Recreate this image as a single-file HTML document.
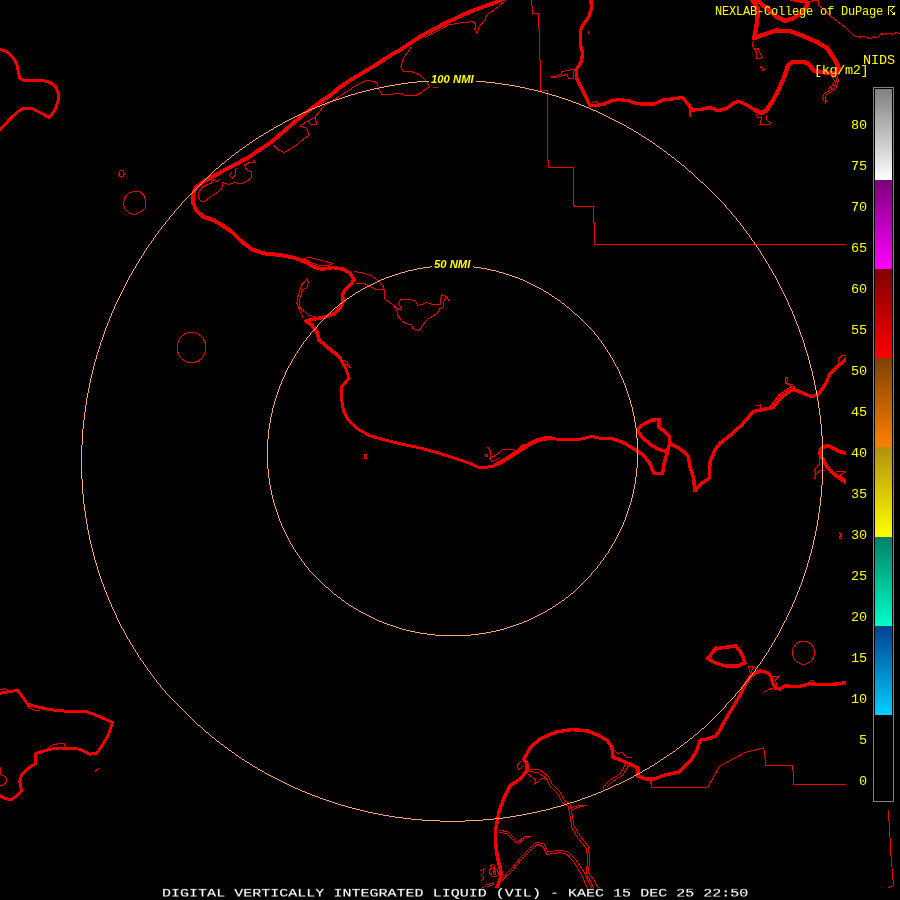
<!DOCTYPE html>
<html lang="en">
<head>
<meta charset="utf-8">
<title>DIGITAL VERTICALLY INTEGRATED LIQUID (VIL) - KAEC</title>
<style>
html,body{margin:0;padding:0;background:#000;}
body{width:900px;height:900px;position:relative;overflow:hidden;}
#map{position:absolute;left:0;top:0;width:900px;height:900px;display:block;}
.t{position:absolute;white-space:pre;line-height:1;margin:0;padding:0;color:#ffff00;
   font-family:"Liberation Mono","DejaVu Sans Mono",monospace;}
.t{will-change:transform;}
.f7{font-size:12px;letter-spacing:-0.2px;}
.f8{font-size:13.5px;letter-spacing:-0.1px;}
.lab{right:33px;text-align:right;}
.rl{font-family:"Liberation Sans","DejaVu Sans",sans-serif;font-weight:bold;font-style:italic;font-size:11.3px;}
#title{left:161.8px;top:888.1px;color:#fff;font-size:15px;letter-spacing:0.02px;-webkit-text-stroke:0.12px #fff;transform:scaleY(0.77);transform-origin:0 0;}
</style>
</head>
<body>
<svg id="map" width="900" height="900" viewBox="0 0 900 900" shape-rendering="crispEdges">
<defs>
<linearGradient id="g0" x1="0" y1="0" x2="0" y2="1"><stop offset="0" stop-color="#808080"/><stop offset="1" stop-color="#ffffff"/></linearGradient>
<linearGradient id="g1" x1="0" y1="0" x2="0" y2="1"><stop offset="0" stop-color="#7c007c"/><stop offset="1" stop-color="#ff00ff"/></linearGradient>
<linearGradient id="g2" x1="0" y1="0" x2="0" y2="1"><stop offset="0" stop-color="#800000"/><stop offset="1" stop-color="#ff0000"/></linearGradient>
<linearGradient id="g3" x1="0" y1="0" x2="0" y2="1"><stop offset="0" stop-color="#804000"/><stop offset="1" stop-color="#ff8000"/></linearGradient>
<linearGradient id="g4" x1="0" y1="0" x2="0" y2="1"><stop offset="0" stop-color="#b09010"/><stop offset="1" stop-color="#ffff00"/></linearGradient>
<linearGradient id="g5" x1="0" y1="0" x2="0" y2="1"><stop offset="0" stop-color="#008064"/><stop offset="1" stop-color="#00ffc8"/></linearGradient>
<linearGradient id="g6" x1="0" y1="0" x2="0" y2="1"><stop offset="0" stop-color="#004090"/><stop offset="1" stop-color="#00d0ff"/></linearGradient>
</defs>
<rect x="0" y="0" width="900" height="900" fill="#000"/>
<g fill="none" stroke="#f20000" stroke-width="1" stroke-linejoin="miter">
<path d="M215.6,178.9 211.1,181.1 212.2,182.8 207.8,184.4 202.2,187.2 198.9,192.2 198.3,197.8 201.1,201.1 205,201.1 210.6,196.7 216.7,192.8 221.7,188.9 222.8,182.8 228.9,184.4 233.3,182.8 242.2,183.3 247.8,180.6 251.7,177.2 251.1,171.7 246.7,170 244.4,165 248.9,162.8 256.1,162.8 253.3,160 M236.1,168.3 235,175.6 232.2,178.3 229.4,175.6 231.7,172.2 M213,180.5 217,181.5 220,179 M273.3,145 278.3,150 284.2,152.5 290,149.2 296.7,145 303.3,139.2 309.2,135 306.7,128.3 300,125.8 308.3,120.8 315,117.5 316.7,124.2 310,124.2 308.3,120.8 M315,117.5 316.7,115 323.3,106.7 333.3,100 346.7,91.7 356.7,85 366.7,80 376.7,82.5 378.3,88.3 381.7,94.2 391.7,94.2 401.7,93.3 405,95.8 415,95.8 420,93.3 429.2,86.7 426.7,81.7 420,75 411.7,71.7 403.3,71.7 400.8,66.7 403.3,58.3 411.7,46.7 M376.7,82.5 375,81.7 370,80.8 366.7,80 M433,87.5 437.5,87.5 M425,37.5 448.3,25 463.3,22.5 473.3,21.7 475.8,24.2 474.7,29.2 477.5,33.3 479.2,26.7 485,20 486.7,15 495,9.2 503.3,2.5 506.7,-1 M123.3,203.3 125,197.5 129.2,192.8 134.2,191.2 140,191.7 144.2,195.8 145.8,201.7 145,208.3 140.8,211.7 134.2,214.7 129.2,213 125,209.2 123.3,203.3 M364,454 366,454 366.5,458 364.5,458 364,454 M307.5,278.3 301.7,285 298.3,295 296.7,303.3 300,310.8 303.3,318.3 M307.5,278.3 308.3,283.3 306.7,287.5 302.5,290 300,298.3 299.2,306.7 303.3,310.8 308.3,315 315,316.7 M303.3,258.3 310,257.5 323.3,260.8 333.3,263.7 326.7,265.8 318.3,265 311.7,263 306.7,260 303.3,258.3 M354.2,271.7 361.7,272.5 371.7,275.8 378.3,280.8 383.3,286.7 385,293.3 384.2,298.3 388.3,301.7 393.3,305 396.7,310 398.3,316.7 403.3,322.5 411.7,325 412.5,328.3 419.2,330.8 421.7,326.7 426.7,320 433.3,315.8 437.5,313.3 439.2,309.2 443.3,306.7 443.3,301.7 446.7,297.5 449.2,300.8 446.7,296.5 441.7,295 440,300 440,304.2 433.3,305 426.7,302.5 418.3,305.8 415,300.8 409.2,299.2 400.8,299.7 398.3,304.2 401.7,308.3 400,310 393.3,305 M355.8,283.3 365,283.7 371.7,287.5 376.7,290 384.2,289.2 M343,360 347,362 349,366 350.5,368 346.5,364.5 M487.5,446.7 490.8,451.7 490,458.3 495,455.8 503.3,449.2 513.3,449.7 516.7,450.8 523.3,444.2 530,444.2 M485.3,454.3 487.3,454.3 487.3,456.3 485.3,456.3 485.3,454.3 M490,458.3 492,462 496,460 500,458 M785.8,377.5 787.5,377.5 786.7,383.3 793.3,385 795,388 785,383 785.8,377.5 M755,405.8 760,405 760,408 M838.3,362 838.3,359 841.7,355.8 846,355.8 M819.3,454.7 819.3,464 814.7,470 815.3,474.7 820,470.7 825.3,470 M815.3,474.7 814.4,478.7 815.5,479 M836,472 841.3,471.3 846,472 M840,475.3 846,472 M839.5,532 840.5,535 839.5,538 841.5,538 841,533 M531.5,-1 532.5,13.5 538.5,13.5 539.5,43.5 540.5,75 540.5,90.5 547.5,90.5 547.5,160.5 548.5,160.5 548.5,167.5 573.5,167.5 573.5,204.5 574.5,206.5 593.5,206.5 593.5,222.5 594.5,222.5 594.5,244.5 848,244.5 M651.7,780 651.7,787.5 707.7,787.5 719.3,766.5 745,752.5 763.7,747.8 766,765.5 792.8,765.5 793.5,784.5 848,784.5 M888.4,810.4 889.3,825.3 890.4,844 891.3,861.3 892.7,873.3 893.3,886 890.7,886.7 888.3,887.3 M550.8,76.7 556,76 561.7,74.2 561.7,71.7 574.2,69.2 573.3,78.3 568.3,78.3 567.5,74.2 561.7,75.8 556,77.5 550.8,77.3 M588,30.5 588,34 M591.7,103 596,101 598,104 M753.3,40.9 752.4,46.2 756,51.6 756,58.7 762.2,57.8 757.8,48 755,50 M759.6,66.7 764.9,68.4 763.1,71.1 761.5,68 M761.7,116.7 760,124.2 768.3,125 770.8,123.3 766.7,120 766.7,115 M756,114 758,118 761.7,116.7 M690,109 689.5,113 690.3,117.5 M691,110 690.5,113 691.3,117 M834.2,74.7 836.9,80 834.2,87.1 828.9,90.7 823.6,94.2 822.7,98.7 826.2,104 M836.5,74.7 838.5,80 836,88 831,92 826,95 825,99 827,102 M832,75 834.5,81 832,86 828,89 M808,1.8 818.2,0 818.2,5.3 825.3,10.7 832.4,17.8 839.6,23.1 846.7,28.4 853.8,35.6 860,37.3 861.3,36.2 865.3,36.2 866.7,37.3 868.9,38.2 871.6,38.2 873.3,36.4 875.1,37.3 877.8,37.3 879.6,35.1 881.3,33.8 882.2,34.7 883.1,33.3 884.9,34.4 886.7,33.3 890.7,33.3 892,34.4 893.8,34.2 896.9,32 898.7,33.3 901,33.5 M48.3,747.5 55,744.2 64.2,743.3 65.8,747.5 M0,766.7 0.8,775 5.8,776.7 6.7,781.7 3.3,785 0,785 M94.5,772.5 96.5,770 99.5,768 M26.7,705.8 33.3,710 40,710.8 M0,690 4,688.5 8,690 M529,769 540,770 548,776 552,784 560,792 564,800 570,804 572,814 574,826 580,836 588,846 590,860 588,872 594,880 599,889 M527,771.5 538,772.5 546,778 550,786 558,794 562,802 568,806 570,816 572,828 578,838 586,848 588,860 586,872 590,880 594,889 M570,808 580,805 588,805 580,806.5 572,810 M528,774 536,780 534,784 538,782 542,778 548,780 M626,764 620,774 610,780 604,786 603,789 M629,765 623,775 613,781 607,787 M499,830 508,832 514,838 518,842 524,837 531,836 524,839 518,844 513,840 507,834 499,832 M502,878 512,868 520,858 530,848 536,842 544,844 548,852 560,850 568,852 576,860 584,872 592,889 M502,880.5 513,870 521,860 531,850 537,844.5 543,846.5 547,854.5 560,852.5 567,854.5 574,862 581,874 588,889 M650,780 652,787 660,787 M614,750 618,754 622,752 626,757 632,758 M490,866 493,864 495,866 493,869 490,866 M489,870 492,868 497,870 499,874 496,877 492,876 489,872 489,870 M493,870 496,872 495,875 493,873 493,870 M480,871 484,869 483,873 481,875 484,878 481,881 M481.3,889 486.7,884.7 493.8,882.9 494,884.5 487,886.5 M520.5,761 517,766 519,770 524,765 M748.3,666.7 750.6,673.9 753.3,666.7 748.3,666.7 M753.3,666.7 756.7,667.8 757.8,670.6 762.2,668.9 M763.3,692.2 768.9,689.4 773.3,688.3 M773.3,676.7 778.9,676.7 775.6,680 776.7,685.6 M712,650 716,646 720,650 M736,645 739,648 741,646 M809,681.5 812,680 814,682 M814.8,652.7 813.7,657.8 810.5,661.9 806.0,664.2 801.0,664.2 796.5,661.9 793.3,657.8 792.2,652.7 793.3,647.6 796.5,643.5 801.0,641.2 806.0,641.2 810.5,643.5 813.7,647.6 814.8,652.7 M205.7,350.6 203.1,356.9 198.1,361.3 191.9,363.0 185.5,361.6 180.4,357.5 177.4,351.3 177.3,344.4 179.9,338.1 184.9,333.7 191.1,332.0 197.5,333.4 202.6,337.5 205.6,343.7 205.7,350.6 M124.2,173.9 123.4,176.4 121.5,177.4 119.6,176.4 118.8,173.9 119.6,171.4 121.5,170.4 123.4,171.4 124.2,173.9"/>
</g>
<g fill="none" stroke="#f20000" stroke-linejoin="round" stroke-linecap="round">
<path stroke-width="3" d="M0,49.2 6.7,51.7 12.5,56.7 16.7,63.3 18.3,71.7 19.7,78.3 25,80.8 33.3,80.3 41.7,80 50,82.5 55.8,86.7 58.3,93.3 58.3,100 55.8,108.3 51.7,115 49.2,117.5 41.7,113.3 31.7,108.3 23.3,108.3 16.7,112.5 8.3,120.8 0,130"/>
<path stroke-width="4.0" d="M503,-1 495,2.5 470,11.7 445,23.3 420,36.7 400,50 392.2,54.2 383.3,60 374.4,65.8 365.6,71.1 356.7,76.4 347.8,81.8 338.9,88 330,95.6 322.2,100.7 313.3,107.3 304.4,114 295.6,121.1 287.8,128 278.9,135.6 270,143.1 258.9,150.2 250,156.4 233.3,165.8 216.7,174.2 203.3,181.7 195.8,187.5 192.8,195 193.3,203.3 196.7,210.8 203.3,216.7 213.3,220 221.7,225 231.7,231.7 240,240 251.7,249.2 263.3,253.3 280,255 293.3,257.5 305,261.7"/>
<path stroke-width="3.6" d="M293.3,257.5 305,261.7 313.3,266.7 321.7,269.2 333.3,267.5 343.3,269.2 350,273.3 354.2,280 350,285 345,290 342.5,295 343.3,301.7 340,308.3 333.3,314.2 323.3,317.5 313.3,319.2 305.8,320.8 311.7,325 316.7,331.7 319.2,340 326.7,346.7 335,353.3 340,358.3"/>
<path stroke-width="3.0" d="M335,353.3 340,358.3 345.8,368.3 349.2,378.3 341.7,386.7 341.7,400 343.3,410 348.3,420 356.7,428.3 370,435.8 385,440 401.7,444.2 418.3,447.5 436.7,452.5 455,458.3 470,463.3 480,468 493.3,466.3 503.3,461.7 515,454.2 526.7,446.7 538.3,440.8 548.3,438.7 560,439.2 573.3,440 583.3,438.7 591.7,436.3 600,438.3 611.7,438.7"/>
<path stroke-width="3.5" d="M600,438.3 611.7,438.7 621.7,441.7 633.3,448.3 643.3,455 649.2,462.5 654.2,473.3 662.5,473.7 664.2,463.3 667.5,451.7 658.3,449.2 650,444.2 641.7,436.7 637.5,430 643.3,424.2 651.7,420 659.2,419.5 659.2,427.5 665,431.7 669.2,435.8 670,443.3 678.3,447.5 688.3,455.8 690,466.7 693.3,476.7 695,490.8 701.7,483.3 709.2,478.3 710,461.7 715,450 720,443.3 731.7,434.2 741.7,425 747.5,418.3 753.3,411.7 761.7,409.7 773.3,407.5 781.7,396.7 793.3,389.2 803.3,393.3 811.7,396.7 818.3,394.2 825,385 830,374.2 838.3,365.8 847,358.5"/>
<path stroke-width="3.5" d="M670,443.3 668.5,447.5 667.5,451.7"/>
<path stroke-width="1.6" d="M771,405.5 779.5,394.5 791,387"/>
<path stroke-width="3" d="M494,465 503,460.3 514.5,453 526,445.5 537.5,439.5 546,437.6 551,437.6"/>
<path stroke-width="3.6" d="M848,453.6 838.7,451.3 832,447.3 826.7,445.3 821.3,448.7 819.3,453.3 822.7,458.7 826,465.3 830.7,471.3 837.3,476.7 848,484"/>
<path stroke-width="2.5" d="M836,474.5 848,481.5"/>
<path stroke-width="3.4" d="M590.8,-2 591.5,8.3 589,16.7 583,25 580.8,30 580.4,45 582.8,53.3 581.3,61.7 576.2,70 576.7,78.3 582.5,90 588,101 589.8,105.3 596,105.5 603.3,104.2 611.7,100.8 618.3,99.5 628.3,100.8 636.7,103.7 653.3,104.2 663.3,100 670,99.2 682.5,97.5 687.5,103.3 692.5,110 701.7,109.2 710,107.5 718.3,110.8 726.7,108.3 733.3,103.3 739.2,101.3 746.7,105 755,110 761.7,113.3"/>
<path stroke-width="4.4" d="M755,110 761.7,113.3 766.7,110 773.3,100 780,86.7 785,75 788.3,65 793.3,61.7 801.7,61.7 807.6,63.1 814.7,71.1 828.9,72.9 837.8,72.9 838.7,67.6 834.2,58.7 827.1,48 816.4,41.8 802.2,35.6 789.8,31.1 775.6,30.6 763.1,34.7 754.2,38.2 756.9,23.1 758,9 751,-2"/>
<path stroke-width="4.4" d="M754.5,-2 766.7,8.3 776.7,16.7 785,20.8 793.3,18.3 803.3,11.7 808,3 806,1.5 792,-1"/>
<path stroke-width="3" d="M0,693.3 8.3,691.7 17.5,690.3 22.5,696.7 27.5,704.2 36.7,706.7 50,709.7 66.7,711.3 86.7,711.7 100,716.7 112.5,722.5 108.3,735 102.5,745 96.7,753.3 90,754.2 80,749.2 71.7,748.3 60,748 50,749.2 41.7,751.7 35.8,753.3 35.8,763.3 28.3,768.3 21.7,775 19.7,781.7 21.7,790.8 16.7,795.8 10.8,800 5,798.3 0,795.8"/>
<path stroke-width="3.5" d="M496,890 499.1,881.6 501.3,874.4 500,867.3 497.3,856.7 495.6,843.3 495.6,830 499,812 504,798 510,786 520,779 527,771 527,764 524,759 530,748 540,739 556,732 572,729.6 588,731 600,736 608,741 612,748 613,757 620,760 630,764 638,768 638,776 646,779 654,779"/>
<path stroke-width="3.4" d="M646,779 654,779 665.7,774.7 678.5,772.3 689,761.8 691.7,758.9 696.7,751.1 699.4,742.2 700.6,740 707.8,738.9 715.6,736.1 719.4,731.1 723.3,723.3 727.8,715.6 733.3,706.7 737.8,698.9 742.2,691.1 745.6,683.9 750,677.2 755.6,672.8 761.1,671.1 767.8,672.8 771.1,676.7 772.8,683.3 775.6,688.3 780,689 784.7,686 798.7,686.5 810.3,683.7 822,684.8 836,684.1 848,682.3"/>
<path stroke-width="3.5" d="M707.7,658.5 715.8,648.7 724,647.5 735.7,645.9 741.5,653.3 745,662.7 738,666.2 726.3,666.2 714.7,662.7 707.7,658.5"/>
</g>
<path transform="translate(0,0.5)" d="M417,81h12M476,81h10M408,82h9M486,82h9M401,83h7M495,83h7M395,84h6M502,84h7M389,85h6M509,85h6M384,86h5M515,86h5M379,87h5M520,87h5M374,88h5M525,88h4M370,89h4M529,89h5M366,90h4M534,90h4M362,91h4M538,91h4M358,92h4M542,92h3M355,93h3M545,93h4M351,94h4M549,94h3M348,95h3M552,95h4M345,96h3M556,96h3M342,97h3M559,97h3M339,98h3M562,98h3M336,99h3M565,99h3M333,100h3M568,100h3M330,101h3M571,101h2M327,102h3M573,102h3M325,103h2M576,103h3M322,104h3M579,104h2M320,105h2M581,105h3M317,106h3M584,106h2M315,107h2M586,107h3M312,108h3M589,108h2M310,109h2M591,109h2M308,110h2M593,110h3M306,111h2M596,111h2M303,112h3M598,112h2M301,113h2M600,113h2M299,114h2M602,114h2M297,115h2M604,115h2M295,116h2M606,116h2M293,117h2M608,117h2M291,118h2M610,118h2M289,119h2M612,119h2M287,120h2M614,120h2M285,121h2M616,121h2M283,122h2M618,122h2M282,123h1M620,123h2M280,124h2M622,124h2M278,125h2M624,125h2M276,126h2M626,126h1M274,127h2M627,127h2M273,128h1M629,128h2M271,129h2M631,129h2M269,130h2M633,130h1M268,131h1M634,131h2M266,132h2M636,132h2M264,133h2M638,133h1M263,134h1M639,134h2M261,135h2M641,135h1M259,136h2M642,136h2M258,137h1M644,137h2M256,138h2M646,138h1M255,139h1M647,139h2M253,140h2M649,140h1M252,141h1M650,141h2M250,142h2M652,142h1M249,143h1M653,143h2M247,144h2M655,144h1M246,145h1M656,145h1M245,146h1M657,146h2M243,147h2M659,147h1M242,148h1M660,148h2M240,149h2M662,149h1M239,150h1M663,150h1M238,151h1M664,151h2M236,152h2M666,152h1M235,153h1M667,153h1M234,154h1M668,154h2M232,155h2M670,155h1M231,156h1M671,156h1M230,157h1M672,157h2M229,158h1M674,158h1M227,159h2M675,159h1M226,160h1M676,160h1M225,161h1M677,161h2M224,162h1M679,162h1M222,163h2M680,163h1M221,164h1M681,164h1M220,165h1M682,165h2M219,166h1M684,166h1M218,167h1M685,167h1M216,168h2M686,168h1M215,169h1M687,169h1M214,170h1M688,170h1M213,171h1M689,171h2M212,172h1M691,172h1M211,173h1M692,173h1M210,174h1M693,174h1M209,175h1M694,175h1M208,176h1M695,176h1M207,177h1M696,177h1M206,178h1M697,178h1M205,179h1M698,179h1M204,180h1M699,180h1M203,181h1M700,181h1M202,182h1M701,182h2M201,183h1M703,183h1M200,184h1M704,184h1M199,185h1M705,185h1M198,186h1M706,186h1M197,187h1M707,187h1M196,188h1M708,188h1M195,189h1M709,189h1M194,190h1M710,190h1M193,191h1M711,191h1M192,192h1M712,192h1M191,193h1M713,193h1M190,194h1M714,194h1M189,195h1M715,195h1M188,196h1M716,196h1M187,197h1M717,197h1M186,198h1M718,198h1M185,199h1M719,199h1M184,200h1M720,200h1M183,201h1M721,201h1M182,202h1M722,202h1M181,203h1M723,203h1M181,204h1M724,204h1M180,205h1M725,205h1M179,206h1M725,206h1M178,207h1M726,207h1M177,208h1M727,208h1M176,209h1M728,209h1M175,210h1M729,210h1M174,211h1M730,211h1M174,212h1M731,212h1M173,213h1M731,213h1M172,214h1M732,214h1M171,215h1M733,215h1M170,216h1M734,216h1M169,217h1M735,217h1M169,218h1M736,218h1M168,219h1M736,219h1M167,220h1M737,220h1M166,221h1M738,221h1M165,222h1M739,222h1M165,223h1M740,223h1M164,224h1M740,224h1M163,225h1M741,225h1M162,226h1M742,226h1M161,227h1M743,227h1M161,228h1M743,228h1M160,229h1M744,229h1M159,230h1M745,230h1M158,231h1M746,231h1M158,232h1M746,232h1M157,233h1M747,233h1M156,234h1M748,234h1M155,235h1M749,235h1M155,236h1M749,236h1M154,237h1M750,237h1M153,238h1M751,238h1M153,239h1M751,239h1M152,240h1M752,240h1M151,241h1M753,241h1M151,242h1M754,242h1M150,243h1M754,243h1M149,244h1M755,244h1M148,245h1M756,245h1M148,246h1M756,246h1M147,247h1M757,247h1M146,248h1M758,248h1M146,249h1M758,249h1M145,250h1M759,250h1M144,251h1M760,251h1M144,252h1M760,252h1M143,253h1M761,253h1M143,254h1M761,254h1M142,255h1M762,255h1M141,256h1M763,256h1M141,257h1M763,257h1M140,258h1M764,258h1M139,259h1M765,259h1M139,260h1M765,260h1M138,261h1M766,261h1M138,262h1M766,262h1M137,263h1M767,263h1M136,264h1M768,264h1M136,265h1M768,265h1M135,266h1M769,266h1M135,267h1M769,267h1M134,268h1M770,268h1M133,269h1M771,269h1M133,270h1M771,270h1M132,271h1M772,271h1M132,272h1M772,272h1M131,273h1M773,273h1M131,274h1M773,274h1M130,275h1M774,275h1M129,276h1M775,276h1M129,277h1M775,277h1M128,278h1M776,278h1M128,279h1M776,279h1M127,280h1M777,280h1M127,281h1M777,281h1M126,282h1M778,282h1M126,283h1M778,283h1M125,284h1M779,284h1M125,285h1M779,285h1M124,286h1M780,286h1M124,287h1M780,287h1M123,288h1M781,288h1M123,289h1M781,289h1M122,290h1M782,290h1M122,291h1M782,291h1M121,292h1M783,292h1M121,293h1M783,293h1M120,294h1M784,294h1M120,295h1M784,295h1M119,296h1M785,296h1M119,297h1M785,297h1M118,298h1M786,298h1M118,299h1M786,299h1M117,300h1M787,300h1M117,301h1M787,301h1M116,302h1M788,302h1M116,303h1M788,303h1M115,304h1M788,304h1M115,305h1M789,305h1M114,306h1M789,306h1M114,307h1M790,307h1M114,308h1M790,308h1M113,309h1M791,309h1M113,310h1M791,310h1M112,311h1M792,311h1M112,312h1M792,312h1M111,313h1M792,313h1M111,314h1M793,314h1M111,315h1M793,315h1M110,316h1M794,316h1M110,317h1M794,317h1M109,318h1M794,318h1M109,319h1M795,319h1M109,320h1M795,320h1M108,321h1M796,321h1M108,322h1M796,322h1M107,323h1M796,323h1M107,324h1M797,324h1M107,325h1M797,325h1M106,326h1M798,326h1M106,327h1M798,327h1M105,328h1M798,328h1M105,329h1M799,329h1M105,330h1M799,330h1M104,331h1M799,331h1M104,332h1M800,332h1M104,333h1M800,333h1M103,334h1M800,334h1M103,335h1M801,335h1M103,336h1M801,336h1M102,337h1M802,337h1M102,338h1M802,338h1M102,339h1M802,339h1M101,340h1M803,340h1M101,341h1M803,341h1M100,342h1M803,342h1M100,343h1M804,343h1M100,344h1M804,344h1M100,345h1M804,345h1M99,346h1M804,346h1M99,347h1M805,347h1M99,348h1M805,348h1M98,349h1M805,349h1M98,350h1M806,350h1M98,351h1M806,351h1M97,352h1M806,352h1M97,353h1M807,353h1M97,354h1M807,354h1M96,355h1M807,355h1M96,356h1M808,356h1M96,357h1M808,357h1M96,358h1M808,358h1M95,359h1M808,359h1M95,360h1M809,360h1M95,361h1M809,361h1M94,362h1M809,362h1M94,363h1M809,363h1M94,364h1M810,364h1M94,365h1M810,365h1M93,366h1M810,366h1M93,367h1M810,367h1M93,368h1M811,368h1M93,369h1M811,369h1M92,370h1M811,370h1M92,371h1M812,371h1M92,372h1M812,372h1M92,373h1M812,373h1M91,374h1M812,374h1M91,375h1M812,375h1M91,376h1M813,376h1M91,377h1M813,377h1M90,378h1M813,378h1M90,379h1M813,379h1M90,380h1M814,380h1M90,381h1M814,381h1M90,382h1M814,382h1M89,383h1M814,383h1M89,384h1M814,384h1M89,385h1M815,385h1M89,386h1M815,386h1M89,387h1M815,387h1M88,388h1M815,388h1M88,389h1M815,389h1M88,390h1M816,390h1M88,391h1M816,391h1M88,392h1M816,392h1M87,393h1M816,393h1M87,394h1M816,394h1M87,395h1M817,395h1M87,396h1M817,396h1M87,397h1M817,397h1M86,398h1M817,398h1M86,399h1M817,399h1M86,400h1M817,400h1M86,401h1M818,401h1M86,402h1M818,402h1M86,403h1M818,403h1M86,404h1M818,404h1M85,405h1M818,405h1M85,406h1M818,406h1M85,407h1M818,407h1M85,408h1M819,408h1M85,409h1M819,409h1M85,410h1M819,410h1M85,411h1M819,411h1M84,412h1M819,412h1M84,413h1M819,413h1M84,414h1M819,414h1M84,415h1M820,415h1M84,416h1M820,416h1M84,417h1M820,417h1M84,418h1M820,418h1M84,419h1M820,419h1M83,420h1M820,420h1M83,421h1M820,421h1M83,422h1M820,422h1M83,423h1M820,423h1M83,424h1M821,424h1M83,425h1M821,425h1M83,426h1M821,426h1M83,427h1M821,427h1M83,428h1M821,428h1M82,429h1M821,429h1M82,430h1M821,430h1M82,431h1M821,431h1M82,432h1M821,432h1M82,433h1M821,433h1M82,434h1M821,434h1M82,435h1M821,435h1M82,436h1M822,436h1M82,437h1M822,437h1M82,438h1M822,438h1M82,439h1M822,439h1M82,440h1M822,440h1M82,441h1M822,441h1M82,442h1M822,442h1M82,443h1M822,443h1M82,444h1M822,444h1M81,445h1M822,445h1M81,446h1M822,446h1M81,447h1M822,447h1M81,448h1M822,448h1M81,449h1M822,449h1M81,450h1M822,450h1M81,451h1M822,451h1M81,452h1M822,452h1M81,453h1M822,453h1M81,454h1M822,454h1M81,455h1M822,455h1M81,456h1M822,456h1M81,457h1M822,457h1M81,458h1M822,458h1M81,459h1M822,459h1M81,460h1M822,460h1M81,461h1M822,461h1M81,462h1M822,462h1M81,463h1M822,463h1M81,464h1M822,464h1M81,465h1M822,465h1M81,466h1M822,466h1M81,467h1M822,467h1M81,468h1M822,468h1M81,469h1M822,469h1M81,470h1M822,470h1M81,471h1M822,471h1M81,472h1M822,472h1M81,473h1M822,473h1M81,474h1M822,474h1M81,475h1M822,475h1M81,476h1M822,476h1M81,477h1M822,477h1M81,478h1M822,478h1M82,479h1M822,479h1M82,480h1M822,480h1M82,481h1M822,481h1M82,482h1M822,482h1M82,483h1M822,483h1M82,484h1M822,484h1M82,485h1M821,485h1M82,486h1M821,486h1M82,487h1M821,487h1M82,488h1M821,488h1M82,489h1M821,489h1M82,490h1M821,490h1M82,491h1M821,491h1M82,492h1M821,492h1M82,493h1M821,493h1M83,494h1M821,494h1M83,495h1M821,495h1M83,496h1M821,496h1M83,497h1M820,497h1M83,498h1M820,498h1M83,499h1M820,499h1M83,500h1M820,500h1M83,501h1M820,501h1M83,502h1M820,502h1M83,503h1M820,503h1M84,504h1M820,504h1M84,505h1M820,505h1M84,506h1M819,506h1M84,507h1M819,507h1M84,508h1M819,508h1M84,509h1M819,509h1M84,510h1M819,510h1M85,511h1M819,511h1M85,512h1M819,512h1M85,513h1M818,513h1M85,514h1M818,514h1M85,515h1M818,515h1M85,516h1M818,516h1M85,517h1M818,517h1M86,518h1M818,518h1M86,519h1M818,519h1M86,520h1M817,520h1M86,521h1M817,521h1M86,522h1M817,522h1M86,523h1M817,523h1M87,524h1M817,524h1M87,525h1M817,525h1M87,526h1M816,526h1M87,527h1M816,527h1M87,528h1M816,528h1M87,529h1M816,529h1M88,530h1M816,530h1M88,531h1M815,531h1M88,532h1M815,532h1M88,533h1M815,533h1M88,534h1M815,534h1M89,535h1M815,535h1M89,536h1M814,536h1M89,537h1M814,537h1M89,538h1M814,538h1M89,539h1M814,539h1M90,540h1M813,540h1M90,541h1M813,541h1M90,542h1M813,542h1M90,543h1M813,543h1M91,544h1M813,544h1M91,545h1M812,545h1M91,546h1M812,546h1M91,547h1M812,547h1M92,548h1M812,548h1M92,549h1M811,549h1M92,550h1M811,550h1M92,551h1M811,551h1M93,552h1M811,552h1M93,553h1M810,553h1M93,554h1M810,554h1M93,555h1M810,555h1M94,556h1M809,556h1M94,557h1M809,557h1M94,558h1M809,558h1M94,559h1M809,559h1M95,560h1M808,560h1M95,561h1M808,561h1M95,562h1M808,562h1M96,563h1M807,563h1M96,564h1M807,564h1M96,565h1M807,565h1M97,566h1M807,566h1M97,567h1M806,567h1M97,568h1M806,568h1M97,569h1M806,569h1M98,570h1M805,570h1M98,571h1M805,571h1M98,572h1M805,572h1M99,573h1M804,573h1M99,574h1M804,574h1M99,575h1M804,575h1M100,576h1M803,576h1M100,577h1M803,577h1M100,578h1M803,578h1M101,579h1M802,579h1M101,580h1M802,580h1M101,581h1M802,581h1M102,582h1M801,582h1M102,583h1M801,583h1M103,584h1M801,584h1M103,585h1M800,585h1M103,586h1M800,586h1M104,587h1M799,587h1M104,588h1M799,588h1M104,589h1M799,589h1M105,590h1M798,590h1M105,591h1M798,591h1M106,592h1M797,592h1M106,593h1M797,593h1M106,594h1M797,594h1M107,595h1M796,595h1M107,596h1M796,596h1M108,597h1M795,597h1M108,598h1M795,598h1M108,599h1M795,599h1M109,600h1M794,600h1M109,601h1M794,601h1M110,602h1M793,602h1M110,603h1M793,603h1M111,604h1M792,604h1M111,605h1M792,605h1M111,606h1M792,606h1M112,607h1M791,607h1M112,608h1M791,608h1M113,609h1M790,609h1M113,610h1M790,610h1M114,611h1M789,611h1M114,612h1M789,612h1M115,613h1M788,613h1M115,614h1M788,614h1M116,615h1M787,615h1M116,616h1M787,616h1M116,617h1M786,617h1M117,618h1M786,618h1M117,619h1M786,619h1M118,620h1M785,620h1M118,621h1M784,621h1M119,622h1M784,622h1M119,623h1M783,623h1M120,624h1M783,624h1M120,625h1M782,625h1M121,626h1M782,626h1M121,627h1M781,627h1M122,628h1M781,628h1M123,629h1M780,629h1M123,630h1M780,630h1M124,631h1M779,631h1M124,632h1M779,632h1M125,633h1M778,633h1M125,634h1M778,634h1M126,635h1M777,635h1M126,636h1M777,636h1M127,637h1M776,637h1M127,638h1M775,638h1M128,639h1M775,639h1M129,640h1M774,640h1M129,641h1M774,641h1M130,642h1M773,642h1M130,643h1M772,643h1M131,644h1M772,644h1M132,645h1M771,645h1M132,646h1M771,646h1M133,647h1M770,647h1M133,648h1M769,648h1M134,649h1M769,649h1M135,650h1M768,650h1M135,651h1M768,651h1M136,652h1M767,652h1M137,653h1M766,653h1M137,654h1M766,654h1M138,655h1M765,655h1M138,656h1M764,656h1M139,657h1M764,657h1M140,658h1M763,658h1M140,659h1M762,659h1M141,660h1M762,660h1M142,661h1M761,661h1M143,662h1M760,662h1M143,663h1M760,663h1M144,664h1M759,664h1M145,665h1M758,665h1M145,666h1M757,666h1M146,667h1M757,667h1M147,668h1M756,668h1M147,669h1M755,669h1M148,670h1M755,670h1M149,671h1M754,671h1M150,672h1M753,672h1M150,673h1M752,673h1M151,674h1M752,674h1M152,675h1M751,675h1M153,676h1M750,676h1M153,677h1M749,677h1M154,678h1M749,678h1M155,679h1M748,679h1M156,680h1M747,680h1M156,681h1M746,681h1M157,682h1M745,682h1M158,683h1M745,683h1M159,684h1M744,684h1M160,685h1M743,685h1M160,686h1M742,686h1M161,687h1M741,687h1M162,688h1M741,688h1M163,689h1M740,689h1M164,690h1M739,690h1M165,691h1M738,691h1M165,692h1M737,692h1M166,693h1M736,693h1M167,694h1M735,694h1M168,695h1M735,695h1M169,696h1M734,696h1M170,697h1M733,697h1M171,698h1M732,698h1M172,699h1M731,699h1M173,700h1M730,700h1M174,701h1M729,701h1M175,702h1M728,702h1M176,703h1M727,703h1M177,704h1M726,704h1M178,705h1M725,705h1M179,706h1M725,706h1M180,707h1M724,707h1M181,708h1M723,708h1M182,709h1M722,709h1M183,710h1M721,710h1M184,711h1M720,711h1M185,712h1M719,712h1M186,713h1M718,713h1M187,714h1M717,714h1M188,715h1M716,715h1M189,716h1M715,716h1M190,717h1M714,717h1M191,718h1M713,718h1M192,719h1M712,719h1M193,720h1M711,720h1M194,721h1M710,721h1M195,722h1M709,722h1M196,723h1M708,723h1M197,724h1M707,724h1M198,725h2M706,725h1M200,726h1M705,726h1M201,727h1M704,727h1M202,728h1M702,728h2M203,729h1M701,729h1M204,730h1M700,730h1M205,731h1M699,731h1M206,732h2M698,732h1M208,733h1M697,733h1M209,734h1M695,734h2M210,735h1M694,735h1M211,736h1M693,736h1M212,737h2M692,737h1M214,738h1M690,738h2M215,739h1M689,739h1M216,740h1M688,740h1M217,741h2M687,741h1M219,742h1M685,742h2M220,743h1M684,743h1M221,744h2M683,744h1M223,745h1M681,745h2M224,746h1M680,746h1M225,747h2M679,747h1M227,748h1M677,748h2M228,749h1M676,749h1M229,750h2M675,750h1M231,751h1M673,751h2M232,752h2M672,752h1M234,753h1M670,753h2M235,754h1M669,754h1M236,755h2M667,755h2M238,756h1M666,756h1M239,757h2M664,757h2M241,758h1M663,758h1M242,759h2M661,759h2M244,760h1M660,760h1M245,761h2M658,761h2M247,762h2M657,762h1M249,763h1M655,763h2M250,764h2M654,764h1M252,765h1M652,765h2M253,766h2M650,766h2M255,767h2M649,767h1M257,768h1M647,768h2M258,769h2M645,769h2M260,770h2M643,770h2M262,771h2M642,771h1M264,772h1M640,772h2M265,773h2M638,773h2M267,774h2M636,774h2M269,775h2M634,775h2M271,776h2M633,776h1M273,777h2M631,777h2M275,778h2M629,778h2M277,779h2M627,779h2M279,780h2M625,780h2M281,781h2M623,781h2M283,782h2M621,782h2M285,783h2M619,783h2M287,784h2M616,784h3M289,785h2M614,785h2M291,786h2M612,786h2M293,787h2M610,787h2M295,788h3M608,788h2M298,789h2M605,789h3M300,790h2M603,790h2M302,791h3M601,791h2M305,792h2M598,792h3M307,793h3M596,793h2M310,794h2M593,794h3M312,795h3M591,795h2M315,796h3M588,796h3M318,797h2M585,797h3M320,798h3M582,798h3M323,799h3M580,799h2M326,800h3M577,800h3M329,801h3M574,801h3M332,802h3M570,802h4M335,803h3M567,803h3M338,804h3M564,804h3M341,805h4M561,805h3M345,806h3M557,806h4M348,807h4M553,807h4M352,808h4M550,808h3M356,809h4M546,809h4M360,810h4M541,810h5M364,811h4M537,811h4M368,812h5M532,812h5M373,813h5M527,813h5M378,814h5M522,814h5M383,815h6M516,815h6M389,816h6M510,816h6M395,817h8M503,817h7M403,818h8M494,818h9M411,819h11M483,819h11M422,820h18M465,820h18M440,821h25M430,266h2M473,266h1M423,267h7M474,267h7M417,268h6M481,268h6M413,269h4M487,269h4M408,270h5M491,270h5M405,271h3M496,271h3M401,272h4M499,272h4M398,273h3M503,273h3M395,274h3M506,274h3M392,275h3M509,275h3M389,276h3M512,276h3M386,277h3M515,277h3M384,278h2M518,278h2M381,279h3M520,279h3M379,280h2M523,280h2M377,281h2M525,281h2M375,282h2M527,282h2M373,283h2M529,283h2M371,284h2M531,284h2M369,285h2M533,285h2M367,286h2M535,286h2M365,287h2M537,287h2M363,288h2M539,288h2M361,289h2M541,289h2M360,290h1M543,290h1M358,291h2M544,291h2M356,292h2M546,292h2M355,293h1M548,293h1M353,294h2M549,294h2M352,295h1M551,295h1M350,296h2M552,296h2M349,297h1M554,297h1M347,298h2M555,298h2M346,299h1M557,299h1M344,300h2M558,300h2M343,301h1M560,301h1M342,302h1M561,302h1M340,303h2M562,303h2M339,304h1M564,304h1M338,305h1M565,305h1M337,306h1M566,306h1M335,307h2M567,307h2M334,308h1M569,308h1M333,309h1M570,309h1M332,310h1M571,310h1M331,311h1M572,311h1M330,312h1M573,312h1M329,313h1M574,313h1M328,314h1M575,314h2M327,315h1M577,315h1M326,316h1M578,316h1M325,317h1M579,317h1M324,318h1M580,318h1M323,319h1M581,319h1M322,320h1M582,320h1M321,321h1M583,321h1M320,322h1M584,322h1M319,323h1M585,323h1M318,324h1M586,324h1M317,325h1M587,325h1M317,326h1M588,326h1M316,327h1M589,327h1M315,328h1M590,328h1M314,329h1M591,329h1M313,330h1M592,330h1M312,331h1M593,331h1M311,332h1M594,332h1M310,333h1M594,333h1M310,334h1M595,334h1M309,335h1M596,335h1M308,336h1M597,336h1M307,337h1M598,337h1M306,338h1M598,338h1M306,339h1M599,339h1M305,340h1M600,340h1M304,341h1M601,341h1M303,342h1M601,342h1M303,343h1M602,343h1M302,344h1M603,344h1M301,345h1M603,345h1M301,346h1M604,346h1M300,347h1M605,347h1M299,348h1M605,348h1M299,349h1M606,349h1M298,350h1M607,350h1M297,351h1M607,351h1M297,352h1M608,352h1M296,353h1M609,353h1M295,354h1M609,354h1M295,355h1M610,355h1M294,356h1M610,356h1M294,357h1M611,357h1M293,358h1M612,358h1M292,359h1M612,359h1M292,360h1M613,360h1M291,361h1M613,361h1M291,362h1M614,362h1M290,363h1M614,363h1M290,364h1M615,364h1M289,365h1M615,365h1M288,366h1M616,366h1M288,367h1M617,367h1M287,368h1M617,368h1M287,369h1M618,369h1M286,370h1M618,370h1M286,371h1M619,371h1M285,372h1M619,372h1M285,373h1M619,373h1M285,374h1M620,374h1M284,375h1M620,375h1M284,376h1M621,376h1M283,377h1M621,377h1M283,378h1M622,378h1M282,379h1M622,379h1M282,380h1M623,380h1M281,381h1M623,381h1M281,382h1M623,382h1M281,383h1M624,383h1M280,384h1M624,384h1M280,385h1M625,385h1M279,386h1M625,386h1M279,387h1M625,387h1M279,388h1M626,388h1M278,389h1M626,389h1M278,390h1M626,390h1M278,391h1M627,391h1M277,392h1M627,392h1M277,393h1M627,393h1M277,394h1M628,394h1M276,395h1M628,395h1M276,396h1M628,396h1M276,397h1M629,397h1M275,398h1M629,398h1M275,399h1M629,399h1M275,400h1M630,400h1M274,401h1M630,401h1M274,402h1M630,402h1M274,403h1M630,403h1M274,404h1M631,404h1M273,405h1M631,405h1M273,406h1M631,406h1M273,407h1M632,407h1M272,408h1M632,408h1M272,409h1M632,409h1M272,410h1M632,410h1M272,411h1M632,411h1M272,412h1M633,412h1M271,413h1M633,413h1M271,414h1M633,414h1M271,415h1M633,415h1M271,416h1M634,416h1M270,417h1M634,417h1M270,418h1M634,418h1M270,419h1M634,419h1M270,420h1M634,420h1M270,421h1M634,421h1M270,422h1M635,422h1M269,423h1M635,423h1M269,424h1M635,424h1M269,425h1M635,425h1M269,426h1M635,426h1M269,427h1M635,427h1M269,428h1M636,428h1M268,429h1M636,429h1M268,430h1M636,430h1M268,431h1M636,431h1M268,432h1M636,432h1M268,433h1M636,433h1M268,434h1M636,434h1M268,435h1M636,435h1M268,436h1M636,436h1M268,437h1M636,437h1M268,438h1M637,438h1M267,439h1M637,439h1M267,440h1M637,440h1M267,441h1M637,441h1M267,442h1M637,442h1M267,443h1M637,443h1M267,444h1M637,444h1M267,445h1M637,445h1M267,446h1M637,446h1M267,447h1M637,447h1M267,448h1M637,448h1M267,449h1M637,449h1M267,450h1M637,450h1M267,451h1M637,451h1M267,452h1M637,452h1M267,453h1M637,453h1M267,454h1M637,454h1M267,455h1M637,455h1M267,456h1M637,456h1M267,457h1M637,457h1M267,458h1M637,458h1M267,459h1M637,459h1M267,460h1M637,460h1M267,461h1M637,461h1M267,462h1M637,462h1M267,463h1M637,463h1M267,464h1M637,464h1M267,465h1M637,465h1M267,466h1M637,466h1M267,467h1M637,467h1M267,468h1M636,468h1M268,469h1M636,469h1M268,470h1M636,470h1M268,471h1M636,471h1M268,472h1M636,472h1M268,473h1M636,473h1M268,474h1M636,474h1M268,475h1M636,475h1M268,476h1M636,476h1M268,477h1M635,477h1M269,478h1M635,478h1M269,479h1M635,479h1M269,480h1M635,480h1M269,481h1M635,481h1M269,482h1M635,482h1M269,483h1M635,483h1M269,484h1M634,484h1M270,485h1M634,485h1M270,486h1M634,486h1M270,487h1M634,487h1M270,488h1M634,488h1M270,489h1M633,489h1M271,490h1M633,490h1M271,491h1M633,491h1M271,492h1M633,492h1M271,493h1M633,493h1M271,494h1M632,494h1M272,495h1M632,495h1M272,496h1M632,496h1M272,497h1M632,497h1M272,498h1M631,498h1M273,499h1M631,499h1M273,500h1M631,500h1M273,501h1M631,501h1M273,502h1M630,502h1M274,503h1M630,503h1M274,504h1M630,504h1M274,505h1M629,505h1M275,506h1M629,506h1M275,507h1M629,507h1M275,508h1M628,508h1M276,509h1M628,509h1M276,510h1M628,510h1M276,511h1M627,511h1M277,512h1M627,512h1M277,513h1M627,513h1M277,514h1M626,514h1M278,515h1M626,515h1M278,516h1M626,516h1M278,517h1M625,517h1M279,518h1M625,518h1M279,519h1M625,519h1M279,520h1M624,520h1M280,521h1M624,521h1M280,522h1M623,522h1M281,523h1M623,523h1M281,524h1M623,524h1M281,525h1M622,525h1M282,526h1M622,526h1M282,527h1M621,527h1M283,528h1M621,528h1M283,529h1M620,529h1M284,530h1M620,530h1M284,531h1M619,531h1M285,532h1M619,532h1M285,533h1M618,533h1M286,534h1M618,534h1M286,535h1M617,535h1M287,536h1M617,536h1M287,537h1M616,537h1M288,538h1M616,538h1M288,539h1M615,539h1M289,540h1M615,540h1M289,541h1M614,541h1M290,542h1M614,542h1M290,543h1M613,543h1M291,544h1M612,544h1M292,545h1M612,545h1M292,546h1M611,546h1M293,547h1M611,547h1M293,548h1M610,548h1M294,549h1M609,549h1M295,550h1M609,550h1M295,551h1M608,551h1M296,552h1M608,552h1M297,553h1M607,553h1M297,554h1M606,554h1M298,555h1M605,555h1M299,556h1M605,556h1M299,557h1M604,557h1M300,558h1M603,558h1M301,559h1M603,559h1M301,560h1M602,560h1M302,561h1M601,561h1M303,562h1M600,562h1M304,563h1M600,563h1M304,564h1M599,564h1M305,565h1M598,565h1M306,566h1M597,566h1M307,567h1M597,567h1M308,568h1M596,568h1M308,569h1M595,569h1M309,570h1M594,570h1M310,571h1M593,571h1M311,572h1M592,572h1M312,573h1M591,573h1M313,574h1M591,574h1M314,575h1M590,575h1M315,576h1M589,576h1M316,577h1M588,577h1M317,578h1M587,578h1M318,579h1M586,579h1M319,580h1M585,580h1M320,581h1M584,581h1M321,582h1M583,582h1M322,583h1M582,583h1M323,584h1M581,584h1M324,585h1M580,585h1M325,586h1M579,586h1M326,587h2M578,587h1M328,588h1M577,588h1M329,589h1M576,589h1M330,590h1M575,590h1M331,591h1M574,591h1M332,592h1M573,592h1M333,593h1M571,593h2M334,594h2M570,594h1M336,595h1M569,595h1M337,596h1M568,596h1M338,597h2M566,597h2M340,598h1M565,598h1M341,599h1M564,599h1M342,600h2M562,600h2M344,601h1M561,601h1M345,602h1M559,602h2M346,603h2M558,603h1M348,604h1M556,604h2M349,605h2M555,605h1M351,606h2M553,606h2M353,607h1M552,607h1M354,608h2M550,608h2M356,609h2M548,609h2M358,610h1M547,610h1M359,611h2M545,611h2M361,612h2M543,612h2M363,613h2M541,613h2M365,614h2M539,614h2M367,615h2M537,615h2M369,616h2M535,616h2M371,617h2M533,617h2M373,618h2M531,618h2M375,619h2M529,619h2M377,620h2M527,620h2M379,621h3M524,621h3M382,622h2M522,622h2M384,623h3M519,623h3M387,624h3M516,624h3M390,625h3M513,625h3M393,626h3M510,626h3M396,627h3M507,627h3M399,628h3M504,628h3M402,629h4M500,629h4M406,630h4M496,630h4M410,631h5M491,631h5M415,632h5M486,632h5M420,633h7M479,633h7M427,634h8M471,634h8M435,635h36" fill="none" stroke="#fca67c" stroke-width="1"/>
<rect x="846" y="46" width="54" height="764" fill="#000"/>
<rect x="0" y="888" width="900" height="12" fill="#000"/>
<rect x="430" y="74" width="46" height="12" fill="#000"/>
<rect x="433" y="259" width="40" height="12" fill="#000"/>
<rect x="873.5" y="87.5" width="20" height="714" fill="none" stroke="#828282" stroke-width="1"/>
<rect x="875" y="89" width="17" height="91" fill="url(#g0)"/>
<rect x="875" y="180" width="17" height="89" fill="url(#g1)"/>
<rect x="875" y="269" width="17" height="89" fill="url(#g2)"/>
<rect x="875" y="358" width="17" height="89" fill="url(#g3)"/>
<rect x="875" y="447" width="17" height="90" fill="url(#g4)"/>
<rect x="875" y="537" width="17" height="89" fill="url(#g5)"/>
<rect x="875" y="626" width="17" height="89" fill="url(#g6)"/>
<path fill="#ffff00" d="M888,6h7v1h-7zM888,7h1v8h-1zM893,7h1v1h-1zM892,8h1v1h-1zM891,9h1v1h-1zM890,10h1v1h-1zM891,11h1v1h-1zM892,12h1v1h-1zM894,12h1v1h-1zM893,13h2v1h-2zM892,14h3v1h-3z"/>
</svg>
<div class="t f7" style="left:715px;top:6.4px;">NEXLAB-College of DuPage</div>
<div class="t f8" style="left:862.9px;top:53.7px;">NIDS</div>
<div class="t f8" style="left:813.5px;top:63.7px;letter-spacing:-0.35px;">[kg/m2]</div>
<div class="t f8 lab" style="top:118.9px;">80</div>
<div class="t f8 lab" style="top:159.9px;">75</div>
<div class="t f8 lab" style="top:200.9px;">70</div>
<div class="t f8 lab" style="top:241.9px;">65</div>
<div class="t f8 lab" style="top:282.9px;">60</div>
<div class="t f8 lab" style="top:323.9px;">55</div>
<div class="t f8 lab" style="top:364.9px;">50</div>
<div class="t f8 lab" style="top:405.9px;">45</div>
<div class="t f8 lab" style="top:446.9px;">40</div>
<div class="t f8 lab" style="top:487.9px;">35</div>
<div class="t f8 lab" style="top:528.9px;">30</div>
<div class="t f8 lab" style="top:569.9px;">25</div>
<div class="t f8 lab" style="top:610.9px;">20</div>
<div class="t f8 lab" style="top:651.9px;">15</div>
<div class="t f8 lab" style="top:692.9px;">10</div>
<div class="t f8 lab" style="top:733.9px;">5</div>
<div class="t f8 lab" style="top:774.9px;">0</div>
<div class="t rl" style="left:431px;top:73.6px;">100 NMI</div>
<div class="t rl" style="left:434px;top:259.1px;">50 NMI</div>
<div class="t" id="title">DIGITAL VERTICALLY INTEGRATED LIQUID (VIL) - KAEC 15 DEC 25 22:50</div>
</body>
</html>
